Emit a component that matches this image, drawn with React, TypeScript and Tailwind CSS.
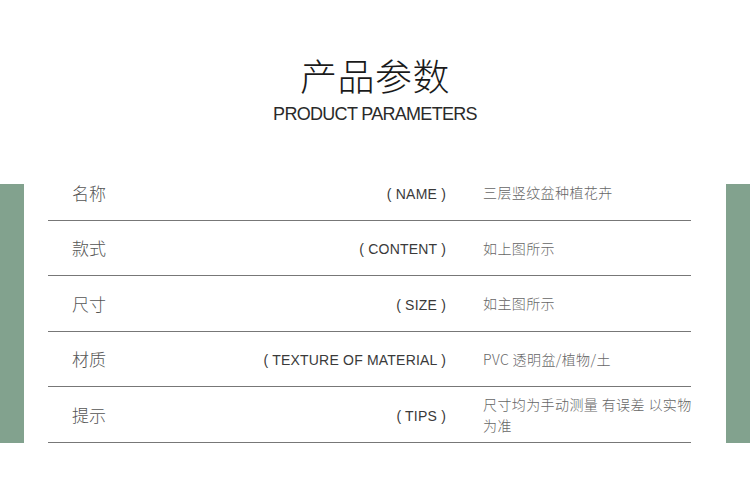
import React from 'react'

const rows = [
  { cn: '名称', en: '( NAME )', value: '三层竖纹盆种植花卉', h: 'h-[56px]' },
  { cn: '款式', en: '( CONTENT )', value: '如上图所示', h: 'h-[55px]' },
  { cn: '尺寸', en: '( SIZE )', value: '如主图所示', h: 'h-[56px]' },
  { cn: '材质', en: '( TEXTURE OF MATERIAL )', value: 'PVC 透明盆/植物/土', h: 'h-[55px]' },
  { cn: '提示', en: '( TIPS )', value: '尺寸均为手动测量 有误差 以实物为准', h: 'h-[56px]' },
]

export default function App() {
  return (
    <div className="w-[750px] h-[503px] bg-white overflow-hidden font-['Liberation_Sans','Noto_Sans_CJK_SC',sans-serif]">
      {/* 标题 */}
      <div className="flex flex-col items-center pt-[53px]">
        <h1 className="text-[37px] leading-[44px] font-light text-[#1a1a1a] tracking-[0.5px] font-['Noto_Sans_CJK_SC',sans-serif]">
          产品参数
        </h1>
        <p className="mt-[7px] text-[18px] leading-[20px] text-[#2a2a2a] tracking-[-0.7px]">
          PRODUCT PARAMETERS
        </p>
      </div>

      {/* 参数表 */}
      <div className="flex mt-[41px]">
        <div className="w-[24px] h-[259px] shrink-0 self-end bg-[#82a28e]" />
        <div className="flex-1 min-w-0 ml-[24px] mr-[35px]">
          {rows.map((row) => (
            <div
              key={row.cn}
              className={`flex items-center border-b border-[#777] ${row.h}`}
            >
              <div className="w-[398px] shrink-0 flex items-center pl-[24px]">
                <span className="text-[17px] font-light text-[#555] font-['Noto_Sans_CJK_SC',sans-serif]">
                  {row.cn}
                </span>
                <span className="ml-auto pt-[3px] text-[14px] tracking-[0.2px] text-[#3a3a3a]">{row.en}</span>
              </div>
              <div className="ml-[37px] w-[218px] shrink-0 text-[14px] leading-[21px] font-light text-[#666] tracking-[0.4px] font-['Noto_Sans_CJK_SC',sans-serif]">
                {row.value}
              </div>
            </div>
          ))}
        </div>
        <div className="w-[24px] h-[259px] shrink-0 self-end bg-[#82a28e]" />
      </div>
    </div>
  )
}
